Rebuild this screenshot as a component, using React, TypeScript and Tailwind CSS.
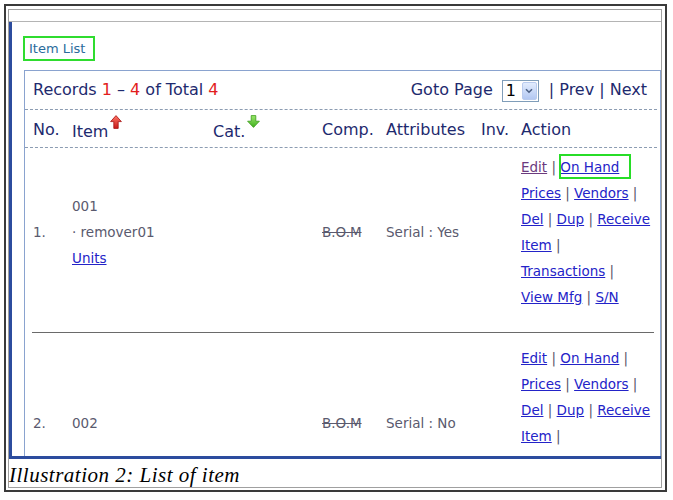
function UpArrow() {
  return (
    <svg width="12" height="14" viewBox="0 0 12 14" className="inline-block align-[8px]">
      <defs>
        <linearGradient id="redArrow" x1="0" x2="0" y1="0" y2="1">
          <stop offset="0" stopColor="#ff7565" />
          <stop offset="1" stopColor="#c81a1a" />
        </linearGradient>
      </defs>
      <path d="M6 0.6 L11.4 6.6 L8.2 6.6 L8.2 13.4 L3.8 13.4 L3.8 6.6 L0.6 6.6 Z" fill="url(#redArrow)" stroke="#a51212" strokeWidth="0.8" />
    </svg>
  );
}

function DownArrow() {
  return (
    <svg width="13" height="13" viewBox="0 0 13 13" className="inline-block align-[9px]">
      <defs>
        <linearGradient id="greenArrow" x1="0" x2="0" y1="0" y2="1">
          <stop offset="0" stopColor="#9be86a" />
          <stop offset="1" stopColor="#3fae1e" />
        </linearGradient>
      </defs>
      <path d="M4.2 0.6 L8.8 0.6 L8.8 6.2 L12.4 6.2 L6.5 12.4 L0.6 6.2 L4.2 6.2 Z" fill="url(#greenArrow)" stroke="#3a9a1a" strokeWidth="0.8" />
    </svg>
  );
}

function Select() {
  return (
    <span className="inline-flex h-[22px] w-[37px] items-stretch border border-[#7f9db9] bg-white align-middle">
      <span className="flex flex-1 items-center pl-[3px] text-[16px] leading-none text-black">1</span>
      <span className="my-[1px] mr-[1px] flex w-[15px] items-center justify-center rounded-[2px] border border-[#b9cbee] bg-gradient-to-b from-[#e2ecfd] to-[#b3c8f2]">
        <svg width="8" height="6" viewBox="0 0 8 6">
          <path d="M1 1.2 L4 4.2 L7 1.2" fill="none" stroke="#4d6185" strokeWidth="1.6" />
        </svg>
      </span>
    </span>
  );
}

const link = "text-[#2323c8] underline";
const sep = <span className="text-[#55556a]"> | </span>;

const cols = "grid grid-cols-[39px_141px_109px_64px_95px_40px_1fr] pl-[8px]";

function Row({ no, code, name, serial, first }: { no: string; code: string; name?: string; serial: string; first?: boolean }) {
  return (
    <div className={`${cols} text-[13.5px] leading-[26px] text-[#5a5a6e] ${first ? "pt-[6px] pb-[22px]" : "pt-[12px]"}`}>
      <div className="self-center">{no}</div>
      <div className="self-center">
        <div>{code}</div>
        {name && <div>· {name}</div>}
        {name && (
          <div>
            <span className={link}>Units</span>
          </div>
        )}
      </div>
      <div />
      <div className="self-center">
        <span className="line-through">B.O.M</span>
      </div>
      <div className="self-center">{serial}</div>
      <div />
      <div className="relative whitespace-nowrap">
        <div>
          <span className={first ? "text-[#6b3a7e] underline" : link}>Edit</span>
          {sep}
          <span className={link}>On Hand</span>
          {!first && sep}
        </div>
        <div>
          <span className={link}>Prices</span>
          {sep}
          <span className={link}>Vendors</span>
          {sep}
        </div>
        <div>
          <span className={link}>Del</span>
          {sep}
          <span className={link}>Dup</span>
          {sep}
          <span className={link}>Receive</span>
        </div>
        <div>
          <span className={link}>Item</span>
          {sep}
        </div>
        <div>
          <span className={link}>Transactions</span>
          {sep}
        </div>
        <div>
          <span className={link}>View Mfg</span>
          {sep}
          <span className={link}>S/N</span>
        </div>
        {first && <div className="absolute left-[38px] top-0 h-[25px] w-[72px] border-2 border-[#27dd27]" />}
      </div>
    </div>
  );
}

export default function App() {
  return (
    <div className="h-[500px] w-[673px] overflow-hidden bg-white pl-[4px] pt-[4px] font-['DejaVu_Sans',sans-serif]">
      <div className="h-[488px] w-[663px] border-2 border-[#3a3a3a]">
        <div className="ml-[2px] mt-[3px] h-[479px] w-[654px] border border-[#a0a0a0]">
          <div className="h-[12px] border-b border-[#b4b4b4]" />
          <div className="flex h-[437px] flex-col overflow-hidden border-b-[3px] border-l-[3px] border-[#2c4c9e] bg-white">
            <div className="ml-[11px] mt-[14px] flex h-[25px] w-[72px] shrink-0 items-center border-2 border-[#2fdc2f] pl-[4px] text-[13px] text-[#2a6c9c]">
              Item List
            </div>
            <div className="ml-[12px] mt-[9px] flex-1 border-l border-r border-t border-[#8aa3cf]">
              <div className="flex h-[38px] items-center justify-between pl-[8px] pr-[13px] text-[16px] text-[#1e2a6e]">
                <div>
                  Records <span className="text-[#e21d1d]">1</span> – <span className="text-[#e21d1d]">4</span> of Total{" "}
                  <span className="text-[#e21d1d]">4</span>
                </div>
                <div className="flex items-center">
                  <span>Goto Page</span>
                  <span className="ml-[9px]">
                    <Select />
                  </span>
                  <span className="ml-[10px] whitespace-pre">| Prev | Next</span>
                </div>
              </div>
              <div className="mr-[3px] border-t border-dashed border-[#8c9cb2]" />
              <div className={`${cols} h-[37px] items-center pt-[2px] text-[16px] text-[#1e2a6e]`}>
                <div>No.</div>
                <div>
                  Item
                  <span className="ml-[2px]">
                    <UpArrow />
                  </span>
                </div>
                <div>
                  Cat.
                  <span className="ml-[2px]">
                    <DownArrow />
                  </span>
                </div>
                <div>Comp.</div>
                <div>Attributes</div>
                <div>Inv.</div>
                <div>Action</div>
              </div>
              <div className="mr-[3px] border-t border-dashed border-[#8c9cb2]" />
              <Row no="1." code="001" name="remover01" serial="Serial : Yes" first />
              <div className="ml-[7px] mr-[6px] border-t border-[#6a6a6a]" />
              <Row no="2." code="002" serial="Serial : No" />
            </div>
          </div>
          <div className="h-[28px] pt-[4px] font-['Liberation_Serif',serif] text-[21px] italic leading-[24px] tracking-[0.5px] text-black">
            Illustration 2: List of item
          </div>
        </div>
      </div>
    </div>
  );
}
